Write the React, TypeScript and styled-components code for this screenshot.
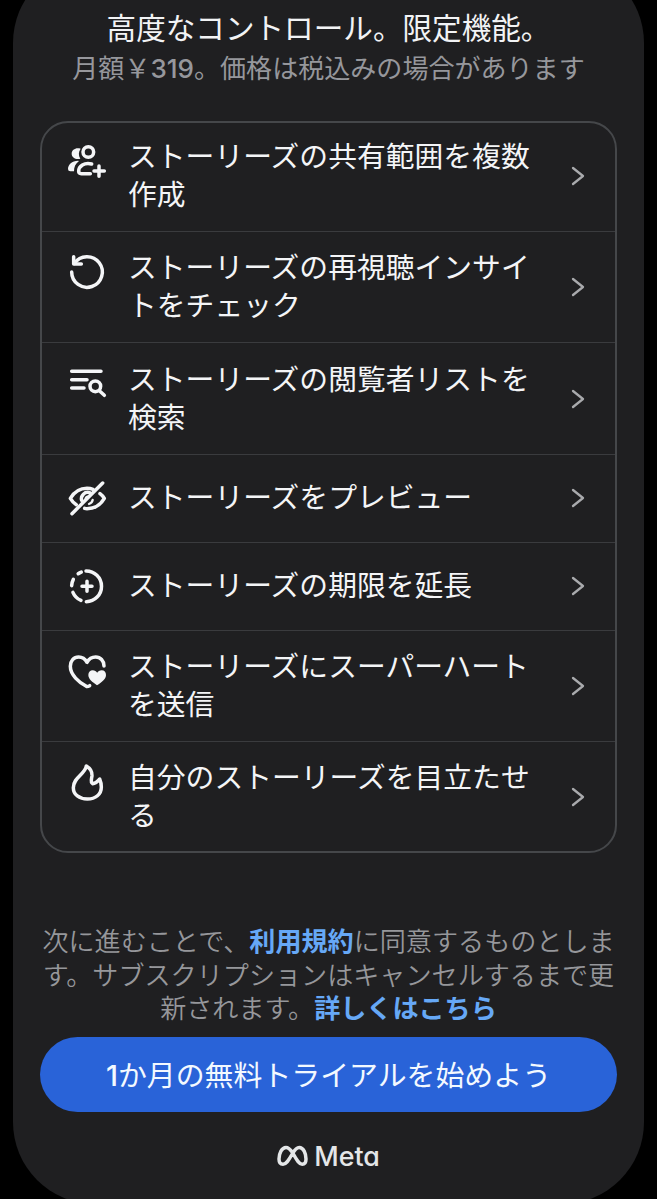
import React from 'react';
import styled, { createGlobalStyle } from 'styled-components';

const GlobalStyle = createGlobalStyle`
  * { box-sizing: border-box; }
  html, body { margin: 0; background: #000; }
  body { font-family: Inter, 'Noto Sans CJK JP', sans-serif; overflow: hidden; }
`;

const Screen = styled.div`
  height: 1199px;
  overflow: hidden;
  display: flex;
  justify-content: center;
  background: #000;
`;

const Sheet = styled.main`
  width: 631px;
  height: 1243px;
  flex: none;
  margin-top: -39px;
  padding: 46px 27px 0;
  border-radius: 82px;
  background: #1f1f21;
  display: flex;
  flex-direction: column;
`;

const Heading = styled.h1`
  margin: 0;
  height: 43px;
  font-size: 29.6px;
  line-height: 42px;
  font-weight: 400;
  text-align: center;
  white-space: nowrap;
  color: #f2f3f5;
`;

const Price = styled.p`
  margin: 0 0 33px;
  height: 38px;
  line-height: 38px;
  font-size: 26.05px;
  text-align: center;
  white-space: nowrap;
  color: #96979c;
`;

const Numeral = styled.span`
  font-weight: 500;
`;

const FeatureList = styled.ul`
  list-style: none;
  margin: 0;
  padding: 0;
  height: 732px;
  border: 2px solid #45474a;
  border-radius: 28px;
  display: flex;
  flex-direction: column;
`;

const FeatureRow = styled.li<{ $height: number; $single?: boolean }>`
  height: ${(p) => p.$height}px;
  flex: none;
  padding: 0 30px ${(p) => (p.$single ? 2 : 0)}px 25px;
  display: flex;
  align-items: center;
  border-bottom: 1px solid #3a3b3e;
  > svg:first-child {
    flex: none;
    align-self: ${(p) => (p.$single ? 'center' : 'flex-start')};
    margin-top: ${(p) => (p.$single ? 0 : 20)}px;
  }
  &:first-child { padding-bottom: 2px; }
  &:first-child > svg:first-child { margin-top: 18px; }
  &:last-child { border-bottom: 0; }
`;

const FeatureLabel = styled.span`
  flex: 1;
  padding-left: 21px;
  font-size: 28.8px;
  line-height: 38px;
  white-space: pre;
  color: #f4f5f7;
`;

const Legal = styled.p`
  margin: 72px -2px 11px;
  height: 101px;
  font-size: 26.1px;
  line-height: 33.7px;
  text-align: center;
  white-space: nowrap;
  color: #96979b;
  font-weight: 350;
`;

const LegalLink = styled.a`
  color: #66a8f6;
  font-weight: 700;
`;

const TrialButton = styled.button`
  flex: none;
  height: 75px;
  border: 0;
  padding: 0 0 4px;
  border-radius: 38px;
  background: #2963d8;
  color: #f3f9ff;
  font: inherit;
  font-size: 28.9px;
  white-space: nowrap;
`;

const Brand = styled.div`
  margin-top: 28px;
  height: 32px;
  display: flex;
  align-items: center;
  justify-content: center;
  gap: 6px;
  font-size: 26.8px;
  font-weight: 500;
  line-height: 32px;
  font-feature-settings: 'cv11';
  color: #e4e6e8;
`;

const Icon = ({ children }: { children: React.ReactNode }) => (
  <svg width="40" height="40" viewBox="0 0 120 120" fill="none" stroke="#f4f5f7"
    strokeWidth="10.5" strokeLinecap="round" strokeLinejoin="round">{children}</svg>
);

const AudienceIcon = () => (
  <Icon>
    <circle cx="64" cy="33" r="16" />
    <path d="M74 69C52 63 35 76 35 91Q35 98 43 98H70" />
    <path d="M96 75V106M81 90H112" />
    <path d="M41 23C27 18 14 26 14 38C14 50 26 56 40 53C34 44 34 32 41 23Z" fill="#f4f5f7" stroke="none" />
    <path d="M33 59C15 59 3 71 3 84Q3 91 10 91H21C21 78 25 68 36 60Z" fill="#f4f5f7" stroke="none" />
  </Icon>
);

const RewatchIcon = () => (
  <Icon>
    <path d="M14 60A46 46 0 1 0 22 34" />
    <path d="M20 14V36H43" />
  </Icon>
);

const SearchListIcon = () => (
  <Icon>
    <path d="M14 25H102M14 50H60M14 75H51" />
    <circle cx="85" cy="70" r="16" />
    <path d="M97 83L112 97" />
  </Icon>
);

const PreviewIcon = () => (
  <Icon>
    <path d="M15 107L107 15" />
    <path d="M28 80Q17 73 10 61Q29 31 60 31Q70 31 78 34" />
    <path d="M99 47Q107 53 112 61Q94 92 60 92Q56 92 53 91" />
    <path d="M44 67A19 19 0 0 1 68 44" />
    <path d="M56 61Q57 57 61 56" strokeWidth="7" />
    <path d="M77 66Q75 75 66 78" strokeWidth="7" />
  </Icon>
);

const ExtendIcon = () => (
  <Icon>
    <path d="M57 15A46 46 0 0 1 58 107" />
    <path d="M33.6 23.3A46 46 0 0 1 42.8 18.3M14 59A46 46 0 0 1 19 40M17.7 79A46 46 0 0 0 42 103.3" />
    <path d="M60 46V76M45 61H75" />
  </Icon>
);

const SuperHeartIcon = () => (
  <Icon>
    <path d="M111 45C111 29 100 18 86 18C74 18 65 25 60 34C55 25 46 18 35 18C20 18 10 30 10 46C10 72 36 94 58 106Q61 108 68 104" />
    <path d="M90 103C76 93 64 84 64 72C64 63 70 58 77 58C83 58 88 61 90.5 65C93 61 98 58 104 58C112 58 117 64 117 72C117 84 104 94 90 103Z"
      fill="#f4f5f7" stroke="none" />
  </Icon>
);

const FlameIcon = () => (
  <Icon>
    <path d="M58 12C54 37 19 46 19 77C19 98 37 111 61 111C86 111 103 97 103 75C103 65 101 58 98 51C93 56 89 64 77 65C69 61 74 51 75 41C76 28 68 18 58 12Z" />
  </Icon>
);

const Chevron = () => (
  <svg width="14" height="20" viewBox="0 0 14 20" fill="none" stroke="#a9aaad"
    strokeWidth="2.3" strokeLinecap="round" strokeLinejoin="round">
    <path d="M2 2L12 10L2 18" />
  </svg>
);

const MetaMark = () => (
  <svg width="31" height="22" viewBox="0 0 31 22" fill="none" stroke="#e4e6e8" strokeWidth="3.5" strokeLinejoin="round">
    <path d="M15.5 7.5C13 4 11.3 2.5 9 2.5C4.8 2.5 2 8.5 2 14C2 17.6 3.6 19.3 6 19.3C9 19.3 11 16.5 15.5 8.5C18 4.3 19.8 2.5 22.3 2.5C26.4 2.5 29 8.5 29 14C29 17.6 27.5 19.3 25.2 19.3C22.3 19.3 20.3 16.2 15.5 7.5Z" />
  </svg>
);

const features = [
  { icon: <AudienceIcon />, label: 'ストーリーズの共有範囲を複数\n作成', height: 109 },
  { icon: <RewatchIcon />, label: 'ストーリーズの再視聴インサイ\nトをチェック', height: 111 },
  { icon: <SearchListIcon />, label: 'ストーリーズの閲覧者リストを\n検索', height: 112 },
  { icon: <PreviewIcon />, label: 'ストーリーズをプレビュー', height: 88, single: true },
  { icon: <ExtendIcon />, label: 'ストーリーズの期限を延長', height: 88, single: true },
  { icon: <SuperHeartIcon />, label: 'ストーリーズにスーパーハート\nを送信', height: 111 },
  { icon: <FlameIcon />, label: '自分のストーリーズを目立たせ\nる', height: 109 },
];

export default function App() {
  return (
    <Screen lang="ja">
      <GlobalStyle />
      <Sheet>
        <Heading>高度なコントロール。限定機能。</Heading>
        <Price>月額￥<Numeral>319</Numeral>。価格は税込みの場合があります</Price>
        <FeatureList>
          {features.map((f) => (
            <FeatureRow key={f.label} $height={f.height} $single={f.single}>
              {f.icon}
              <FeatureLabel>{f.label}</FeatureLabel>
              <Chevron />
            </FeatureRow>
          ))}
        </FeatureList>
        <Legal>
          次に進むことで、<LegalLink>利用規約</LegalLink>に同意するものとしま<br />
          す。サブスクリプションはキャンセルするまで更<br />
          新されます。<LegalLink>詳しくはこちら</LegalLink>
        </Legal>
        <TrialButton><Numeral>1</Numeral>か月の無料トライアルを始めよう</TrialButton>
        <Brand><MetaMark />Meta</Brand>
      </Sheet>
    </Screen>
  );
}
